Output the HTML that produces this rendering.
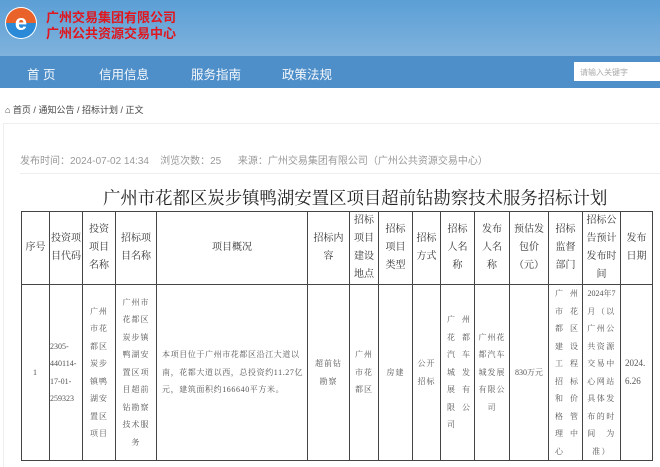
<!DOCTYPE html>
<html><head><meta charset="utf-8"><style>
*{margin:0;padding:0;box-sizing:border-box}
body{width:660px;height:467px;overflow:hidden;background:#fff;font-family:"Liberation Sans","Noto Sans CJK SC",sans-serif;position:relative}
.hd{position:absolute;left:0;top:0;width:660px;height:56px;background:linear-gradient(#5b9fd6,#7fb2dc)}
.nav{position:absolute;left:0;top:56px;width:660px;height:32px;background:#4f8fc9;color:#f4f8fc;font-size:12.5px}
.nav span{position:absolute;top:8px}
.ab{position:absolute;white-space:nowrap}
table{position:absolute;left:21px;top:211px;width:631px;border-collapse:collapse;table-layout:fixed;font-family:"Liberation Serif","Noto Serif CJK SC",serif}
td{border:1px solid #444;text-align:center;vertical-align:middle;font-size:10px;color:#333;line-height:18px;padding:0;white-space:nowrap;overflow:hidden}
.b td{font-size:8px;color:#555;line-height:17.5px;letter-spacing:1px}
</style></head><body>
<div class="hd"></div>
<svg class="ab" style="left:4px;top:6px" width="34" height="34" viewBox="0 0 34 34">
<circle cx="17" cy="17" r="16" fill="#fff"/>
<path d="M2 17A15 15 0 0 1 32 17Z" fill="#e8622a"/>
<path d="M2 17A15 15 0 0 0 32 17Z" fill="#2a8ad8"/>
<text x="17" y="24" font-size="22" fill="#fff" text-anchor="middle" font-family="Liberation Sans" font-weight="bold">e</text>
</svg>
<div class="ab" style="left:46px;top:10px;color:#e0171f;font-size:13px;font-weight:bold;line-height:16px">广州交易集团有限公司<br>广州公共资源交易中心</div>
<div class="nav"><span style="left:27px">首 页</span><span style="left:99px">信用信息</span><span style="left:191px">服务指南</span><span style="left:282px">政策法规</span>
<div class="ab" style="left:574px;top:6px;width:86px;height:19px;background:#fff;color:#aaa;font-size:8px;padding:5px 6px">请输入关键字</div></div>
<div class="ab" style="left:5px;top:103px;font-size:9px;color:#444">⌂ 首页 / 通知公告 / 招标计划 / 正文</div>
<div class="ab" style="left:3px;top:123px;width:657px;height:344px;border-top:1px solid #eee;border-left:1px solid #eee"></div>
<div class="ab" style="left:20px;top:152px;font-size:10px;color:#999">发布时间：2024-07-02 14:34 &nbsp;&nbsp;&nbsp;浏览次数：25 &nbsp;&nbsp;&nbsp;&nbsp;&nbsp;来源：广州交易集团有限公司（广州公共资源交易中心）</div>
<div class="ab" style="left:20px;top:173px;width:640px;border-top:1px solid #eee"></div>
<div class="ab" style="left:103px;top:184px;font-size:17.4px;color:#222;font-family:'Liberation Serif','Noto Serif CJK SC',serif">广州市花都区炭步镇鸭湖安置区项目超前钻勘察技术服务招标计划</div>
<table>
<colgroup><col style="width:28px"><col style="width:33px"><col style="width:33px"><col style="width:41px"><col style="width:151px"><col style="width:42px"><col style="width:29px"><col style="width:34px"><col style="width:28px"><col style="width:34px"><col style="width:35px"><col style="width:39px"><col style="width:34px"><col style="width:38px"><col style="width:32px"></colgroup>
<tr style="height:69px"><td>序号</td><td>投资项<br>目代码</td><td>投资<br>项目<br>名称</td><td>招标项<br>目名称</td><td>项目概况</td><td>招标内<br>容</td><td>招标<br>项目<br>建设<br>地点</td><td>招标<br>项目<br>类型</td><td>招标<br>方式</td><td>招标<br>人名<br>称</td><td>发布<br>人名<br>称</td><td>预估发<br>包价<br>（元）</td><td>招标<br>监督<br>部门</td><td>招标公<br>告预计<br>发布时<br>间</td><td>发布<br>日期</td></tr>
<tr class="b" style="height:175px"><td>1</td><td style="text-align:left;letter-spacing:0">2305-<br>440114-<br>17-01-<br>259323</td><td>广州<br>市花<br>都区<br>炭步<br>镇鸭<br>湖安<br>置区<br>项目</td><td>广州市<br>花都区<br>炭步镇<br>鸭湖安<br>置区项<br>目超前<br>钻勘察<br>技术服<br>务</td><td style="text-align:left;padding-left:5px;letter-spacing:0.6px">本项目位于广州市花都区沿江大道以<br>南，花都大道以西，总投资约11.27亿<br>元，建筑面积约166640平方米。</td><td>超前钻<br>勘察</td><td>广州<br>市花<br>都区</td><td>房建</td><td>公开<br>招标</td><td style="text-align:left;padding-left:6px;letter-spacing:7px">广州<br>花都<br>汽车<br>城发<br>展有<br>限公<br>司</td><td>广州花<br>都汽车<br>城发展<br>有限公<br>司</td><td style="letter-spacing:0">830万元</td><td style="text-align:left;padding-left:6px;letter-spacing:7px">广州<br>市花<br>都区<br>建设<br>工程<br>招标<br>和价<br>格管<br>理中<br>心</td><td style="letter-spacing:1.5px"><span style="letter-spacing:0">2024年7</span><br>月（以<br>广州公<br>共资源<br>交易中<br>心网站<br>具体发<br>布的时<br>间　为<br>准）</td><td style="text-align:left;letter-spacing:0;font-size:9px;padding-left:4px">2024.<br>6.26</td></tr>
</table>
</body></html>
